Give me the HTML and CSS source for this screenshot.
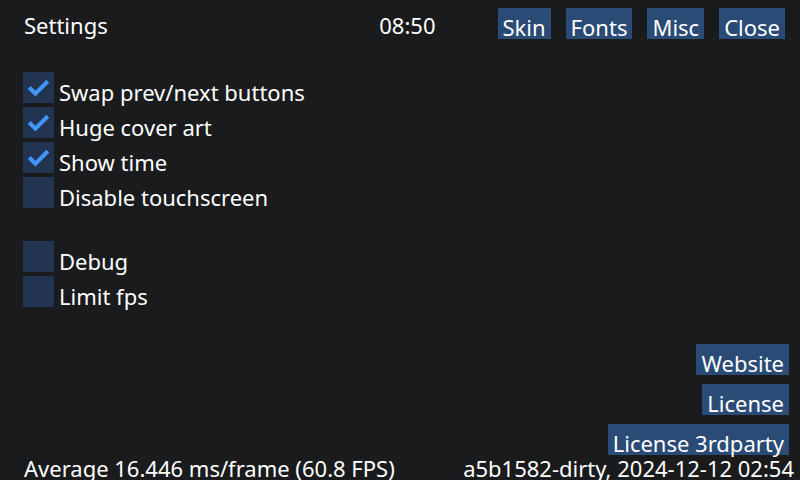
FILE: index.html
```html
<!DOCTYPE html>
<html>
<head>
<meta charset="utf-8">
<link rel="stylesheet" href="styles.css">
</head>
<body>
<div class="screen">
  <header class="topbar">
    <span class="title">Settings</span>
    <span class="time">08:50</span>
    <nav class="tabs">
      <span class="btn">Skin</span>
      <span class="btn">Fonts</span>
      <span class="btn">Misc</span>
      <span class="btn">Close</span>
    </nav>
  </header>
  <section class="options">
    <div class="row"><span class="box"><svg viewBox="0 0 31 31"><polyline points="6.2,15.5 12.4,21.7 24.8,9.3"/></svg></span><span class="label">Swap prev/next buttons</span></div>
    <div class="row"><span class="box"><svg viewBox="0 0 31 31"><polyline points="6.2,15.5 12.4,21.7 24.8,9.3"/></svg></span><span class="label">Huge cover art</span></div>
    <div class="row"><span class="box"><svg viewBox="0 0 31 31"><polyline points="6.2,15.5 12.4,21.7 24.8,9.3"/></svg></span><span class="label">Show time</span></div>
    <div class="row"><span class="box"></span><span class="label">Disable touchscreen</span></div>
    <div class="spacer"></div>
    <div class="row"><span class="box"></span><span class="label">Debug</span></div>
    <div class="row"><span class="box"></span><span class="label">Limit fps</span></div>
  </section>
  <div class="links">
    <span class="btn">Website</span>
    <span class="btn">License</span>
    <span class="btn">License 3rdparty</span>
  </div>
  <footer class="footer">
    <span>Average 16.446 ms/frame (60.8 FPS)</span>
    <span>a5b1582-dirty, 2024-12-12 02:54</span>
  </footer>
</div>
</body>
</html>
```
FILE: styles.css
```css
html, body {
  margin: 0;
  padding: 0;
  background: #1a1b1d;
}
.screen {
  width: 800px;
  height: 480px;
  overflow: hidden;
  display: flex;
  flex-direction: column;
  font-family: "Noto Sans", sans-serif;
  font-size: 22px;
  color: #ffffff;
  box-sizing: border-box;
}
.topbar {
  display: flex;
  align-items: flex-start;
  padding: 8px 15px 0 24px;
  height: 31px;
}
.title {
  flex: 1;
  line-height: 31px;
  padding-top: 2px;
}
.time {
  line-height: 31px;
  padding-top: 2px;
  margin-right: 62px;
}
.tabs {
  display: flex;
  gap: 15px;
}
.btn {
  display: block;
  box-sizing: border-box;
  height: 31px;
  line-height: 31px;
  padding: 4px 5px 0 5px;
  background: #2a4b75;
  white-space: nowrap;
}
.options {
  margin-top: 33px;
  padding-left: 23px;
  display: flex;
  flex-direction: column;
}
.row {
  display: flex;
  align-items: flex-start;
  height: 35px;
}
.box {
  width: 31px;
  height: 31px;
  background: #22344f;
  flex: none;
}
.box svg {
  display: block;
  width: 31px;
  height: 31px;
  fill: none;
  stroke: #4296fa;
  stroke-width: 4.1;
}
.label {
  margin-left: 5px;
  line-height: 31px;
  padding-top: 5px;
}
.spacer {
  height: 29px;
}
.links {
  margin-top: auto;
  display: flex;
  flex-direction: column;
  align-items: flex-end;
  gap: 9px;
  padding-right: 11px;
}
.footer {
  display: flex;
  justify-content: space-between;
  line-height: 31px;
  height: 31px;
  margin-top: -2px;
  margin-bottom: -4px;
  padding: 0 6px 0 24px;
  white-space: nowrap;
}
```
